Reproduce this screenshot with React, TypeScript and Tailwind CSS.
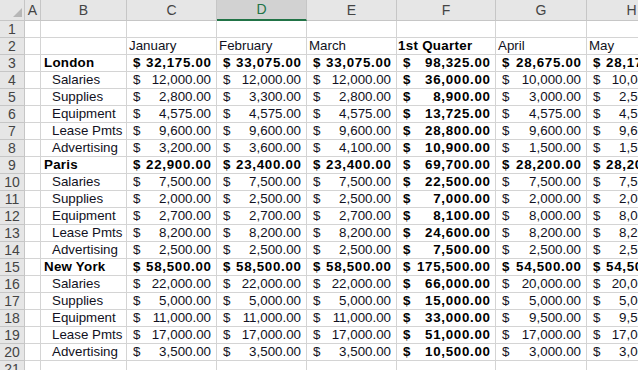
import React from "react";

type Line = { label: string; values: number[] };
type City = { name: string; items: Line[] };

const cities: City[] = [
  {
    name: "London",
    items: [
      { label: "Salaries", values: [12000, 12000, 12000, 36000, 10000, 10000] },
      { label: "Supplies", values: [2800, 3300, 2800, 8900, 3000, 2500] },
      { label: "Equipment", values: [4575, 4575, 4575, 13725, 4575, 4575] },
      { label: "Lease Pmts", values: [9600, 9600, 9600, 28800, 9600, 9600] },
      { label: "Advertising", values: [3200, 3600, 4100, 10900, 1500, 1500] },
    ],
  },
  {
    name: "Paris",
    items: [
      { label: "Salaries", values: [7500, 7500, 7500, 22500, 7500, 7500] },
      { label: "Supplies", values: [2000, 2500, 2500, 7000, 2000, 2000] },
      { label: "Equipment", values: [2700, 2700, 2700, 8100, 8000, 8000] },
      { label: "Lease Pmts", values: [8200, 8200, 8200, 24600, 8200, 8200] },
      { label: "Advertising", values: [2500, 2500, 2500, 7500, 2500, 2500] },
    ],
  },
  {
    name: "New York",
    items: [
      { label: "Salaries", values: [22000, 22000, 22000, 66000, 20000, 20000] },
      { label: "Supplies", values: [5000, 5000, 5000, 15000, 5000, 5000] },
      { label: "Equipment", values: [11000, 11000, 11000, 33000, 9500, 9500] },
      { label: "Lease Pmts", values: [17000, 17000, 17000, 51000, 17000, 17000] },
      { label: "Advertising", values: [3500, 3500, 3500, 10500, 3000, 3000] },
    ],
  },
];

const months = ["January", "February", "March", "1st Quarter", "April", "May"];
const letters = ["A", "B", "C", "D", "E", "F", "G", "H"];

const fmt = (n: number) =>
  n.toLocaleString("en-US", { minimumFractionDigits: 2, maximumFractionDigits: 2 });

const cell = "h-[17px] border-r border-b border-[#d4d4d4] flex items-center overflow-hidden whitespace-nowrap";
const rowHead =
  "h-[17px] bg-[#e6e6e6] border-r border-b border-[#c6c6c6] flex items-center justify-center text-[14px] text-[#444]";

function Money({ value, bold }: { value: number; bold?: boolean }) {
  return (
    <div className={`${cell} justify-between pl-[6px] pr-[5px] ${bold ? "font-bold text-black" : ""}`}>
      <span>$</span>
      <span className={bold ? "tracking-[0.7px] -mr-[0.7px]" : ""}>{fmt(value)}</span>
    </div>
  );
}

type Row =
  | { kind: "blank" }
  | { kind: "months" }
  | { kind: "total"; name: string; values: number[] }
  | { kind: "item"; label: string; values: number[] };

const rows: Row[] = [{ kind: "blank" }, { kind: "months" }];
cities.forEach((c) => {
  const totals = c.items[0].values.map((_, i) => c.items.reduce((s, it) => s + it.values[i], 0));
  rows.push({ kind: "total", name: c.name, values: totals });
  c.items.forEach((it) => rows.push({ kind: "item", label: it.label, values: it.values }));
});
rows.push({ kind: "blank" });

export default function App() {
  return (
    <div className="w-[638px] h-[370px] overflow-hidden bg-white text-[13.33px] text-[#111122] font-['Liberation_Sans',Arial,sans-serif]">
      <div className="grid w-max grid-cols-[25px_16px_86px_90px_90px_90px_99px_91px_90px]">
        {/* header row */}
        <div className="relative h-[21px] bg-[#e6e6e6] border-r border-b border-[#c6c6c6]">
          <div className="absolute right-[2px] bottom-[3px] w-0 h-0 border-l-[9px] border-l-transparent border-b-[9px] border-b-[#b7b7b7]" />
        </div>
        {letters.map((l) =>
          l === "D" ? (
            <div
              key={l}
              className="h-[21px] bg-[#d2d2d2] border-r border-[#c6c6c6] border-b-2 border-b-[#217346] flex items-center justify-center text-[14px] text-[#217346]"
            >
              {l}
            </div>
          ) : (
            <div
              key={l}
              className="h-[21px] bg-[#e6e6e6] border-r border-b border-[#c6c6c6] flex items-center justify-center text-[14px] text-[#444]"
            >
              {l}
            </div>
          )
        )}

        {rows.map((r, i) => (
          <React.Fragment key={i}>
            <div className={rowHead}>{i + 1}</div>
            <div className={cell} />
            {r.kind === "blank" && (
              <>
                {months.map((_, j) => (
                  <div key={j} className={cell} />
                ))}
                <div className={cell} />
              </>
            )}
            {r.kind === "months" && (
              <>
                <div className={cell} />
                {months.map((m, j) => (
                  <div
                    key={j}
                    className={`${cell} ${j === 3 ? "font-bold text-black pl-[1px] tracking-[0.3px]" : "pl-[2px]"}`}
                  >
                    {m}
                  </div>
                ))}
              </>
            )}
            {r.kind === "total" && (
              <>
                <div className={`${cell} pl-[3px] font-bold text-black tracking-[0.25px]`}>{r.name}</div>
                {r.values.map((v, j) => (
                  <Money key={j} value={v} bold />
                ))}
              </>
            )}
            {r.kind === "item" && (
              <>
                <div className={`${cell} pl-[11px]`}>{r.label}</div>
                {r.values.map((v, j) => (
                  <Money key={j} value={v} bold={j === 3} />
                ))}
              </>
            )}
          </React.Fragment>
        ))}
      </div>
    </div>
  );
}
